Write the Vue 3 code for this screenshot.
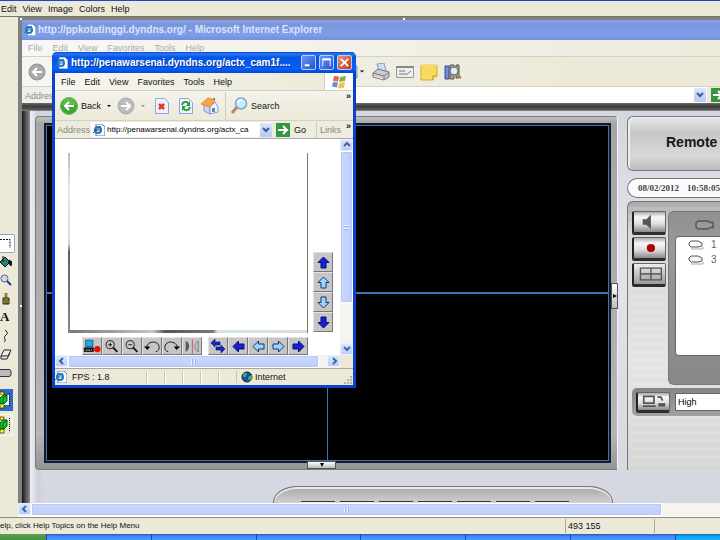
<script setup>
const paintMenu = ['Edit', 'View', 'Image', 'Colors', 'Help']
const browserMenu = ['File', 'Edit', 'View', 'Favorites', 'Tools', 'Help']
const tools = ['Select', 'Fill', 'Magnifier', 'Brush', 'Text', 'Curve', 'Eraser', 'Rounded rectangle']
const cameras = [1, 3]
const tilt = [
  { name: 'Tilt up fast', turn: 'up', tone: 'solid' },
  { name: 'Tilt up', turn: 'up', tone: 'pale' },
  { name: 'Tilt down', turn: 'down', tone: 'pale' },
  { name: 'Tilt down fast', turn: 'down', tone: 'solid' }
]
const pan = [
  { name: 'Pan left fast', turn: 'left', tone: 'solid' },
  { name: 'Pan left', turn: 'left', tone: 'pale' },
  { name: 'Pan right', turn: 'right', tone: 'pale' },
  { name: 'Pan right fast', turn: 'right', tone: 'solid' }
]
const arrows = {
  up: 'M6.5 1 12 6.5H9V12H4V6.5H1z',
  down: 'M6.5 12 12 6.5H9V1H4v5.500H1z',
  left: 'M1 6.500 6.500 1v3H12v5H6.500v3z',
  right: 'M12 6.500 6.500 1v3H1v5h5.500v3z'
}
</script>

<template>
  <div class="desktop">
    <nav class="paint-menu">
      <button v-for="m in paintMenu" :key="m">{{ m }}</button>
    </nav>

    <main class="work">
      <aside class="toolbox">
        <div class="tools">
          <button v-for="(t, i) in tools" :key="t" :aria-label="t" :class="{ active: i === 0 }">
            <svg v-if="i === 0" viewBox="0 0 12 12"><path d="M0 2.500h10V11" fill="none" stroke="#111" stroke-dasharray="2 1" /></svg>
            <svg v-else-if="i === 1" viewBox="0 0 12 12"><path d="M0 6 5 1l5 5-5 5z" fill="#2b7f78" stroke="#111" /><path d="M3 0v6M9 4l3 2-1 4-3-3" stroke="#111" fill="#111" /></svg>
            <svg v-else-if="i === 2" viewBox="0 0 12 12"><circle cx="4.500" cy="4.500" r="3.500" fill="#c9dce8" stroke="#667" /><path d="m7 7 4 4" stroke="#22339a" stroke-width="2" /></svg>
            <svg v-else-if="i === 3" viewBox="0 0 12 12"><path d="M5 0h2v5H5z" fill="#caa800" stroke="#554400" stroke-width=".6" /><path d="M3 5h6v6H3z" fill="#d8c33c" stroke="#222" /><path d="M3 7h6M5 8v3M7 8v3" stroke="#222" /></svg>
            <span v-else-if="i === 4" class="letter">A</span>
            <svg v-else-if="i === 5" viewBox="0 0 12 12"><path d="M5 0c4 3 2 4 0 6s2 4-1 6" fill="none" stroke="#111" /></svg>
            <svg v-else-if="i === 6" viewBox="0 0 12 12"><path d="M4 2h7L8 8H1zM1 8v3h6l3-6" fill="#eee" stroke="#222" /></svg>
            <svg v-else viewBox="0 0 12 12"><rect x="-3" y="2.500" width="14" height="7" rx="2" fill="#bbb" stroke="#333" /></svg>
          </button>
        </div>
        <div class="modes">
          <button v-for="n in 2" :key="n" :class="{ chosen: n === 1 }" :aria-label="n === 1 ? 'Opaque' : 'Transparent'">
            <svg viewBox="0 0 12 20"><path d="M0 2h4v3H0zM0 14h4v4H0z" fill="#ff0" stroke="#222" stroke-width=".7" /><path :d="n === 1 ? 'M0 5h9v10H0z' : ''" fill="#fff" /><path d="M0 8l3-3h4v6l-3 3H0z" fill="#10c52d" stroke="#075715" /><path d="M3 8v6M3 8l4-3" stroke="#075715" /><path d="M9.500 3v13" stroke="#111" stroke-dasharray="1 1" /></svg>
          </button>
        </div>
      </aside>

      <section class="canvas">
        <div class="browser">
          <header class="title dim">
            <svg class="ie" viewBox="0 0 12 12"><path d="M3 0h6l3 3v9H3z" fill="#fff" stroke="#507bbd" /><circle cx="5" cy="6" r="3" fill="none" stroke="#2675ba" stroke-width="2" /><path d="M2 6h6M0 9 8 2" stroke="#2675ba" /></svg>
            <h1>http://ppkotatinggi.dyndns.org/ - Microsoft Internet Explorer</h1>
          </header>
          <nav class="menu"><button v-for="m in browserMenu" :key="m">{{ m }}</button></nav>
          <div class="toolbar">
            <button class="round" aria-label="Back">
              <svg viewBox="0 0 18 18"><circle cx="9" cy="9" r="8" fill="#aaa" stroke="#929292" /><path d="M14 9H5m4-4L5 9l4 4" stroke="#fff" stroke-width="2" fill="none" /></svg>
            </button>
            <div class="page-tools">
              <svg viewBox="0 0 18 18"><path d="M0 3h9v12H0z" fill="#bfd1f1" stroke="#738fc8" /><path d="M12 7.500h4l-2 2z" /></svg>
              <svg viewBox="0 0 18 18"><path d="m5 1 7-1 2 8H7z" fill="#cbe0ff" stroke="#829cc5" /><path d="m1 10 5-4 11 3v5l-5 3L1 14z" fill="#ccc" stroke="#777" /><path d="m1 10 11 3 5-4M12 13v4" stroke="#777" fill="none" /><path d="m2 13 9 3" stroke="#eee" /></svg>
              <svg viewBox="0 0 18 18"><path d="M.5 3.500h17v11H.5z" fill="#eee" stroke="#999" /><path d="M0 4h18" stroke="#888" stroke-width="2" /><path d="M3 8h6M3 11h7m0 1 5-4" stroke="#777" /></svg>
              <svg viewBox="0 0 18 18"><path d="M1 2h16v11l-4 4H1z" fill="#f8da62" stroke="#d4aa24" /><path d="M1 2h16" stroke="#fff0a0" /><path d="M17 13h-4v4" fill="#fff2aa" stroke="#b8901c" /></svg>
              <svg viewBox="0 0 18 18"><path d="M1 3h4v13H1z" fill="#758ed5" stroke="#34488c" /><path d="M6 2h4v14H6zM12 2h3v13h-3z" fill="#b2a373" stroke="#555" /><circle cx="10" cy="8" r="4" fill="#d6eff8" stroke="#667" /><path d="m13 11 4 4" stroke="#a68738" stroke-width="2" /></svg>
            </div>
          </div>
          <div class="address">
            <label for="page-url">Address</label>
            <input id="page-url" value="" />
            <button class="drop" aria-label="Show addresses"><svg viewBox="0 0 8 8"><path d="m1 2 3 3 3-3" fill="none" stroke="#405991" stroke-width="2" /></svg></button>
            <button class="go" aria-label="Go"><svg viewBox="0 0 14 14"><path d="M0 0h14v14H0z" fill="#359642" /><path d="M2 7h9M7 3l4 4-4 4" stroke="#fff" stroke-width="2" fill="none" /></svg></button>
          </div>

          <div class="page">
            <div class="viewer">
              <div class="feeds"><div v-for="n in 4" :key="n"></div></div>
              <button class="tab side" aria-label="Hide panel"><svg viewBox="0 0 4 4"><path d="M0 0 4 2 0 4z" /></svg></button>
              <button class="tab foot" aria-label="Hide controls"><svg viewBox="0 0 4 4"><path d="M0 0h4L2 4z" /></svg></button>
            </div>
            <aside class="remote">
              <h2>Remote</h2>
              <p class="clock"><time>08/02/2012</time><time>10:58:05</time></p>
              <div class="controls">
                <div class="split">
                  <div class="keys">
                    <button aria-label="Sound"><svg viewBox="0 0 32 22"><path d="M8 8h4l5-5v16l-5-5H8z" fill="#555" /></svg></button>
                    <button aria-label="Record"><svg viewBox="0 0 32 22"><circle cx="17" cy="11" r="4.500" fill="#ac0005" /></svg></button>
                    <button aria-label="Split view" class="dull"><svg viewBox="0 0 32 22"><path d="M5.500 4.500h23v13h-23zM17 5v13M6 11h22" fill="none" stroke="#555" stroke-width="1.500" /></svg></button>
                  </div>
                  <div class="cams">
                    <svg class="cam" viewBox="0 0 20 10"><path d="M3 1h10l2 1.500h3v5h-3L13 9H3L1 7V3z" fill="#999" stroke="#555" stroke-width="1.500" /></svg>
                    <ul>
                      <li v-for="c in cameras" :key="c"><svg viewBox="0 0 16 10"><path d="M3 1h7l4 2v3l-4 1H3L1 5V3z" fill="#f7f7f7" stroke="#555" /><path d="M3 9h12V7" stroke="#aaa" fill="none" /></svg>{{ c }}</li>
                    </ul>
                  </div>
                </div>
                <div class="quality">
                  <button aria-label="Display"><svg viewBox="0 0 34 21"><path d="M5 5h12v8H5zM4 16.500h15M21 6h4l2 4" fill="none" stroke="#555" stroke-width="2" /><path d="M22 13h8v4h-8z" fill="#555" /></svg></button>
                  <select aria-label="Quality"><option>High</option></select>
                </div>
              </div>
            </aside>
            <div class="dock"><button v-for="n in 7" :key="n" :aria-label="'Preset ' + n"></button></div>
          </div>
        </div>

        <div class="hscroll outer">
          <button aria-label="Scroll left"><svg viewBox="0 0 8 8"><path d="M5 1 2 4l3 3" fill="none" stroke="#4863a1" stroke-width="2" /></svg></button>
          <div class="thumb"><i></i></div>
          <div class="rest"></div>
        </div>
      </section>

      <section class="popup">
        <header class="title">
          <svg class="ie" viewBox="0 0 12 12"><path d="M3 0h6l3 3v9H3z" fill="#fff" stroke="#477bd2" /><circle cx="5" cy="6" r="3" fill="none" stroke="#2675ba" stroke-width="2" /><path d="M2 6h6M0 9 8 2" stroke="#2675ba" /></svg>
          <h1>http://penawarsenai.dyndns.org/actx_cam1f....</h1>
          <button aria-label="Minimize"><svg viewBox="0 0 14 14"><path d="M3 10h5" stroke="#fff" stroke-width="2" /></svg></button>
          <button aria-label="Maximize"><svg viewBox="0 0 14 14"><path d="M3 11V4h8v7" fill="none" stroke="#fff" /><path d="M2.500 3.500h9" stroke="#fff" stroke-width="2" /></svg></button>
          <button aria-label="Close" class="close"><svg viewBox="0 0 14 14"><path d="m3 3 8 8m0-8-8 8" stroke="#fff" stroke-width="2" /></svg></button>
        </header>
        <nav class="menu">
          <button v-for="m in browserMenu" :key="m">{{ m }}</button>
          <span class="flag"><svg viewBox="0 0 16 14"><path d="m3 1 5 .5-1 5-5-.5z" fill="#e5673f" /><path d="m9 2 6-1-1 5-6 1z" fill="#7db34b" /><path d="m2 7 5 .5-1 5-5-1z" fill="#5d92dc" /><path d="m8 8 6-1-1 6-6 .5z" fill="#f2c54b" /></svg></span>
        </nav>
        <div class="toolbar">
          <button class="labelled">
            <svg viewBox="0 0 18 18"><circle cx="9" cy="9" r="8.500" fill="#3fa535" stroke="#70b563" /><path d="M2 8a7 7 0 0 1 14 0" fill="#72c75c" opacity=".6" /><path d="M14 9H5m4-4L5 9l4 4" stroke="#fff" stroke-width="2" fill="none" /></svg>Back
          </button>
          <svg class="caret" viewBox="0 0 4 4"><path d="M0 1h4L2 3z" /></svg>
          <button aria-label="Forward"><svg viewBox="0 0 18 18"><circle cx="9" cy="9" r="8" fill="#bbb" stroke="#aaa" /><path d="M4 9h9M9 5l4 4-4 4" stroke="#fff" stroke-width="2" fill="none" /></svg></button>
          <svg class="caret faint" viewBox="0 0 4 4"><path d="M0 1h4L2 3z" /></svg>
          <div class="set">
            <button aria-label="Stop"><svg viewBox="0 0 18 18"><path d="M2.500 1.500h9l4 4v11h-13z" fill="#edf3ff" stroke="#91a7dc" /><path d="m6 7 5 5m0-5-5 5" stroke="#e33b1f" stroke-width="2.500" /></svg></button>
            <button aria-label="Refresh"><svg viewBox="0 0 18 18"><path d="M2.500 1.500h9l4 4v11h-13z" fill="#edf3ff" stroke="#91a7dc" /><path d="M5 8c1-4 5-4 7-1M13 10c-1 4-5 4-7 1" fill="none" stroke="#299e3e" stroke-width="2" /><path d="M13 4v5H9zM5 14V9h4z" fill="#299e3e" /></svg></button>
            <button aria-label="Home"><svg viewBox="0 0 18 18"><path d="m3 8 6 2v7l-6-3z" fill="#c7d8f4" stroke="#849bc8" /><path d="m9 10 5-5 3 5v5l-8 2z" fill="#edf3fc" stroke="#849bc8" /><path d="M11 11h3v4h-3z" fill="#6283bd" /><path d="m0 7 7-6 7 2-5 7z" fill="#f4a544" stroke="#e28c2f" /><path d="M12 1h2v3" fill="#c44c35" /></svg></button>
          </div>
          <button class="labelled search"><svg viewBox="0 0 18 18"><path d="m2 16 5-6" stroke="#be895a" stroke-width="3" /><circle cx="11" cy="6.500" r="5.500" fill="#c9edfb" stroke="#7ba6d0" stroke-width="1.500" /><path d="M8 6c0-2 2-3 4-3" stroke="#fff" fill="none" stroke-width="2" /></svg>Search</button>
          <span class="more">»</span>
        </div>
        <div class="address">
          <label for="cam-url">Address</label>
          <div class="combo">
            <svg class="ie" viewBox="0 0 12 12"><path d="M3 0h6l3 3v9H3z" fill="#fff" stroke="#477bd2" /><circle cx="5" cy="6" r="3" fill="none" stroke="#2675ba" stroke-width="2" /><path d="M2 6h6M0 9 8 2" stroke="#194f97" /></svg>
            <input id="cam-url" value="http://penawarsenai.dyndns.org/actx_ca" />
            <button class="drop" aria-label="Show addresses"><svg viewBox="0 0 8 8"><path d="m1 2 3 3 3-3" fill="none" stroke="#405991" stroke-width="2" /></svg></button>
          </div>
          <button class="go"><svg viewBox="0 0 14 14"><path d="M0 0h14v14H0z" fill="#359642" /><path d="M2 7h9M7 3l4 4-4 4" stroke="#fff" stroke-width="2" fill="none" /></svg>Go</button>
          <a class="links" href="#">Links</a>
          <span class="more">»</span>
        </div>

        <div class="content">
          <div class="camera">
            <div class="picture"></div>
            <div class="tilt">
              <button v-for="b in tilt" :key="b.name" :aria-label="b.name"><svg viewBox="0 0 13 13"><path :d="arrows[b.turn]" :class="b.tone" /></svg></button>
            </div>
            <div class="strip">
              <div class="group">
                <button aria-label="Record"><svg viewBox="0 0 20 16"><path d="M3 1h8v7H3z" fill="#1ab1d2" stroke="#2350a6" /><path d="M1 9h11v5H1z" fill="#111" /><path d="M3 12h7" stroke="#fff" stroke-dasharray="2 1" /><circle cx="16" cy="11" r="3.500" fill="#f00b0b" /></svg></button>
                <button aria-label="Zoom in"><svg viewBox="0 0 20 16"><circle cx="8" cy="6" r="4.500" fill="none" stroke="#111" /><path d="M6 6h4M8 4v4" stroke="#111" /><path d="m11 9 5 5" stroke="#111" stroke-width="2" /></svg></button>
                <button aria-label="Zoom out"><svg viewBox="0 0 20 16"><circle cx="8" cy="6" r="4.500" fill="none" stroke="#111" /><path d="M6 6h4" stroke="#111" /><path d="m11 9 5 5" stroke="#111" stroke-width="2" /></svg></button>
                <button aria-label="Rotate left"><svg viewBox="0 0 20 16"><path d="M4 9c1-8 14-8 14 0 0 2-1 4-4 5" fill="none" stroke="#111" /><path d="M1 8h7l-3 4z" /></svg></button>
                <button aria-label="Rotate right"><svg viewBox="0 0 20 16"><path d="M16 9C15 1 2 1 2 9c0 2 1 4 4 5" fill="none" stroke="#111" /><path d="M19 8h-7l3 4z" /></svg></button>
                <button aria-label="Mirror"><svg viewBox="0 0 20 16"><path d="M3 2c5 2 5 9 0 12z" fill="#555c5c" /><path d="M10.500 0v16" stroke="#d55" /><path d="M17 2c-5 2-5 9 0 12z" fill="#c3c6ca" stroke="#777" /></svg></button>
              </div>
              <div class="group">
                <button aria-label="Auto pan"><svg viewBox="0 0 16 14"><path d="m1 4 4-4v3h5v3H5v2zM15 10l-4 4v-3H6V8h5V6z" fill="#1824c0" stroke="#08106c" stroke-width=".6" /></svg></button>
                <button v-for="b in pan" :key="b.name" :aria-label="b.name"><svg viewBox="0 0 13 13"><path :d="arrows[b.turn]" :class="b.tone" /></svg></button>
              </div>
            </div>
          </div>
          <div class="vscroll">
            <button aria-label="Scroll up"><svg viewBox="0 0 8 8"><path d="m1 5 3-3 3 3" fill="none" stroke="#4863a1" stroke-width="2" /></svg></button>
            <div class="thumb"><i></i></div>
            <div class="rest"></div>
            <button aria-label="Scroll down"><svg viewBox="0 0 8 8"><path d="m1 2 3 3 3-3" fill="none" stroke="#4863a1" stroke-width="2" /></svg></button>
          </div>
          <div class="hscroll">
            <button aria-label="Scroll left"><svg viewBox="0 0 8 8"><path d="M5 1 2 4l3 3" fill="none" stroke="#4863a1" stroke-width="2" /></svg></button>
            <div class="thumb"><i></i></div>
            <div class="rest"></div>
            <button aria-label="Scroll right"><svg viewBox="0 0 8 8"><path d="m3 1 3 3-3 3" fill="none" stroke="#4863a1" stroke-width="2" /></svg></button>
          </div>
          <div class="corner"></div>
        </div>

        <footer class="popup-status">
          <svg class="ie" viewBox="0 0 12 12"><path d="M3 0h6l3 3v9H3z" fill="#fff" stroke="#477bd2" /><circle cx="5" cy="6" r="3" fill="none" stroke="#2675ba" stroke-width="2" /><path d="M2 6h6M0 9 8 2" stroke="#2675ba" /></svg>
          <span class="fps">FPS : 1.8</span>
          <span v-for="n in 5" :key="n" class="cell"></span>
          <span class="zone"><svg viewBox="0 0 12 12"><circle cx="6" cy="6" r="5" fill="#1b49b5" stroke="#123" /><path d="M2 3c4-2 5-1 3 2s-2 0-3 1zM7 6l4-2v4L8 10z" fill="#42b34a" /></svg>Internet</span>
          <svg class="grip" viewBox="0 0 9 9"><path d="M6 0h2v2H6zM3 3h2v2H3zM6 3h2v2H6zM0 6h2v2H0zM3 6h2v2H3zM6 6h2v2H6z" fill="#b8b4a0" /></svg>
        </footer>
      </section>
    </main>

    <footer class="status"><span>elp, click Help Topics on the Help Menu</span><output>493 155</output><span></span></footer>
    <div class="taskbar"><i class="start"></i><i v-for="n in 6" :key="n"></i><i class="tray"></i></div>
  </div>
</template>

<style>
body { margin: 0; overflow: hidden; }
</style>

<style scoped>
* { box-sizing: border-box; }
.desktop { height: 100vh; display: flex; flex-direction: column; background: #ece9d8; font: 9px/12px "Liberation Sans", sans-serif; color: #111; overflow: hidden; }
button { font: inherit; color: inherit; padding: 0; border: 0; background: none; display: flex; align-items: center; justify-content: center; flex: none; }
input, select { font: inherit; color: #000; border: 0; padding: 0; margin: 0; background: #fff; border-radius: 0; appearance: none; min-width: 0; outline: 0; }
svg { display: block; flex: none; }
h1, h2, p, ul { margin: 0; padding: 0; }

.paint-menu { flex: none; height: 17px; display: flex; align-items: center; gap: 6px; padding-left: 1px; border-top: 1px solid #2b4c8f; border-bottom: 1px solid #77746a; box-shadow: inset 0 2px #dfe8f6; }
.work { flex: 1; min-height: 0; display: flex; position: relative; }
.toolbox { flex: none; width: 18px; padding-top: 217px; }
.tools { display: grid; grid-template-rows: repeat(8, 1fr); height: 148px; width: 15px; }
.tools button { justify-content: flex-start; }
.tools .active { border: 1px solid #94a8b8; border-left: 0; border-radius: 0 2px 2px 0; background: #fff; }
.tools svg { width: 12px; height: 12px; }
.letter { font: bold 13px/16px "Liberation Serif", serif; }
.modes { padding-top: 7px; display: grid; gap: 3px; width: 13px; }
.modes button { height: 22px; justify-content: flex-start; border: 1px solid #faf9f2; border-left: 0; }
.modes .chosen { background: #316ac5; border-color: #316ac5; }
.modes svg { width: 12px; height: 20px; }

.canvas { flex: 1; min-width: 0; display: flex; flex-direction: column; padding-top: 3px; border-bottom: 1px solid #fff; background: linear-gradient(#fff, #fff) 2px 1px / 2px 2px no-repeat, linear-gradient(#fff, #fff) 55% 1px / 2px 2px no-repeat, linear-gradient(#fff, #fff) 2px 58% / 2px 2px no-repeat, #808080; }
.browser { flex: 1; min-height: 0; margin-left: 4px; display: flex; flex-direction: column; overflow: hidden; color: #8a8a88; }
.title { display: flex; align-items: center; flex: none; }
.title h1 { font: bold 10px/16px "Liberation Sans", sans-serif; white-space: nowrap; flex: 1; }
.dim { height: 20px; padding-left: 2px; gap: 2px; color: #d9e4fb; background: linear-gradient(#8ba3e0, #7a95df 20%, #7f9fe8 75%, #728ee0); }
.ie { width: 12px; height: 12px; }
.menu { display: flex; align-items: center; flex: none; }
.browser .menu { height: 17px; padding-left: 6px; gap: 10px; background: linear-gradient(to right, #f7f7f5, #ecebdc); border-bottom: 1px solid #d5d2c2; color: #aaa; }
.browser .toolbar { height: 30px; display: flex; align-items: center; flex: none; padding-left: 6px; background: linear-gradient(to right, #f5f5f2, #ece9d8 80%); border-bottom: 1px solid #d5d2c2; }
.round svg, .page-tools svg { width: 18px; height: 18px; }
.page-tools { display: flex; gap: 6px; padding-left: 302px; }
.browser .address { height: 16px; display: flex; align-items: center; flex: none; background: #fff; }
.browser .address label { width: 37px; padding-left: 3px; align-self: stretch; background: #f0efea; line-height: 18px; }
.browser .address input { flex: 1; height: 16px; }
.drop { width: 12px; height: 14px; background: linear-gradient(#dbe6ff, #b5c9f5); border-radius: 1px; }
.drop svg { width: 8px; height: 8px; }
.go svg { width: 14px; height: 14px; }
.browser .go { width: 13px; height: 16px; margin-left: 1px; justify-content: flex-start; overflow: hidden; background: #ece9d8; padding-left: 4px; }

.page { flex: 1; min-height: 0; display: grid; grid-template: minmax(0, 1fr) 33px / minmax(0, 1fr) 93px; column-gap: 9px; padding: 13px 0 0 13px; background: linear-gradient(#6d6d6d, #3b3b3b 40%, #5e5e5e 90%, #b5b5ba) 0 0 / 100% 8px no-repeat, linear-gradient(to right, #161616, #555 50%, #8c8c90) 0 0 / 8px 100% no-repeat, linear-gradient(to right, #f0f0f7, #ced1da 8px, transparent 14px) 8px 8px no-repeat, linear-gradient(#d2d6de, #e2e4e9 40%, #d4d7e0); }
.viewer { position: relative; padding: 8px 8px 8px 10px; border: 1px solid #7c7c7c; border-right-color: #f4f4f4; border-radius: 4px 4px 0 4px; background: linear-gradient(to bottom, #bfbfbf, #a5a5a5 7px, #b5b5b5 90%, #959595); }
.feeds { height: 100%; display: grid; grid-template: 1fr 1fr / 1fr 1fr; gap: 2px 1px; background: #3e70bd; border: 1px solid #3e70bd; outline: 2px solid #171b22; }
.feeds div { background: #000; }
.tab { position: absolute; background: linear-gradient(#fff, #bbb); border: 1px solid #555; }
.tab svg { width: 4px; height: 4px; }
.side { right: -1px; top: 166px; width: 7px; height: 26px; }
.foot { bottom: 0; left: 271px; width: 29px; height: 8px; }

.remote { min-width: 0; display: flex; flex-direction: column; }
.remote h2 { height: 55px; flex: none; padding-left: 38px; border: 1px solid #777; border-right: 0; border-radius: 6px 0 0 6px; font: bold 14px/50px "Liberation Sans", sans-serif; color: #161616; background: linear-gradient(#e8e8e8, #c7c7c7 30%, #d9d9d9 75%, #bababa); box-shadow: inset 2px 1px #eee; }
.clock { flex: none; height: 20px; margin: 7px 0 3px; display: flex; gap: 8px; padding-left: 10px; border: 1px solid #777; border-right: 0; border-radius: 10px 0 0 10px; background: #fafafa; font: bold 9px/18px "Liberation Serif", serif; color: #444; white-space: nowrap; }
.controls { flex: 1; min-height: 0; padding: 9px 0 0 4px; border: 1px solid #777; border-right: 0; border-bottom: 0; border-radius: 6px 0 0 0; background: repeating-linear-gradient(transparent 0 5px, #ffffff1c 5px 8px), linear-gradient(#aaa, #d8d8d8 30px, #e4e4e4 60%, #d6d6d6); }
.split { display: flex; gap: 2px; height: 174px; }
.keys { width: 34px; display: grid; gap: 2px; align-content: start; }
.keys button, .quality button { background: linear-gradient(#aaa, #f7f7f7 25%, #ddd 60%, #888); border: 1px solid #666; border-left: 2px solid #222; border-bottom: 3px solid #2d2d2d; border-radius: 2px; }
.keys button { height: 24px; width: 34px; }
.keys .dull { background: linear-gradient(#eee, #999); }
.keys svg { width: 32px; height: 20px; }
.cams { flex: 1; padding: 8px 0 0 6px; background: linear-gradient(#919191, #999 20%, #888); border: 1px solid #777; border-radius: 6px 0 0 6px; border-right: 0; }
.cam { width: 20px; height: 10px; margin-left: 20px; }
.cams ul { list-style: none; margin-top: 6px; height: 120px; background: #fff; border: 1px solid #666; border-right: 0; border-radius: 4px 0 0 4px; padding-left: 12px; font-size: 10px; line-height: 15px; color: #666; }
.cams li { display: flex; align-items: center; gap: 7px; }
.cams li svg { width: 16px; height: 10px; }
.quality { height: 28px; margin-top: 3px; display: flex; align-items: center; gap: 5px; padding-left: 4px; background: linear-gradient(#858585, #a2a2a2); border-radius: 5px 0 0 5px; }
.quality button { width: 34px; height: 21px; }
.quality svg { width: 30px; height: 18px; }
.quality select { flex: 1; height: 18px; padding-left: 2px; border: 1px solid #666; border-right: 0; }
.dock { grid-column: 1 / -1; display: flex; gap: 5px; align-items: end; align-self: end; justify-self: start; width: 340px; height: 17px; margin-left: 238px; padding: 0 27px; border: 1px solid #777; border-bottom: 0; border-radius: 24px 24px 0 0 / 16px 16px 0 0; background: linear-gradient(#aaa, #cfcfcf); box-shadow: inset 0 2px #e7e7e9; }
.dock button { width: 34px; height: 2px; border-top: 1px solid #333; background: #eee; }

.hscroll { display: flex; align-items: stretch; background: #f5f4ee; }
.outer { flex: none; height: 13px; }
.hscroll button, .vscroll button { width: 13px; height: 12px; background: linear-gradient(#dce6ff, #bccdf8); border: 1px solid #e8effe; border-radius: 2px; }
.hscroll button svg, .vscroll button svg { width: 8px; height: 8px; }
.thumb { display: flex; align-items: center; justify-content: center; background: linear-gradient(#cbd8ff, #c0cdf9); border: 1px solid #fff; outline: 1px solid #b7c7ef; outline-offset: -2px; border-radius: 2px; }
.thumb i { width: 5px; height: 6px; background: repeating-linear-gradient(to right, #eef3ff 0 1px, #9db2e8 1px 2px, transparent 2px 3px); }
.outer .thumb { flex: 1; }
.outer .rest { width: 58px; }

.popup { position: absolute; left: 52px; top: 35px; width: 304px; height: 336px; display: flex; flex-direction: column; padding: 0 3px 3px; background: #0b3fd0; border-radius: 5px 5px 0 0; overflow: hidden; }
.popup .title { height: 21px; margin: 0 -3px; padding: 0 4px; gap: 3px; color: #fff; background: linear-gradient(#0a48c8, #2878f8 10%, #0455e4 25%, #0560fa 80%, #0449cf); }
.popup .title h1 { text-shadow: 1px 1px #0a318c; }
.popup .title button { width: 15px; height: 15px; border: 1px solid #b9cdfa; border-radius: 2px; background: linear-gradient(135deg, #6a95f2, #2454d6); }
.popup .title .close { background: linear-gradient(135deg, #e99377, #c33817); }
.popup .title button svg { width: 13px; height: 13px; }
.popup .menu { height: 18px; padding-left: 6px; gap: 9px; background: linear-gradient(to right, #f6f5f0, #ece9d8); border-bottom: 1px solid #d3d0c0; }
.flag { margin-left: auto; width: 29px; height: 17px; background: #fff; border-left: 1px solid #d3d0c0; display: flex; align-items: center; justify-content: center; }
.flag svg { width: 16px; height: 14px; }
.popup .toolbar { height: 30px; flex: none; display: flex; align-items: center; gap: 6px; padding-left: 5px; background: linear-gradient(#f4f3ec, #ece9d8); border-bottom: 1px solid #d3d0c0; }
.popup .toolbar button svg { width: 18px; height: 18px; }
.labelled { gap: 3px; }
.popup .caret { width: 4px; height: 4px; }
.faint { opacity: .4; }
.set { display: flex; gap: 6px; padding-left: 2px; }
.search { border-left: 1px solid #d0cdbd; height: 28px; padding-left: 4px; }
.more { margin-left: auto; padding-right: 2px; font-weight: bold; align-self: flex-start; line-height: 10px; }
.popup .address { height: 17px; flex: none; display: flex; align-items: center; background: #eeebdf; }
.popup .address label { width: 36px; padding-left: 2px; color: #8b887e; }
.combo { flex: none; width: 181px; height: 15px; display: flex; align-items: center; gap: 2px; padding-left: 2px; background: #fff; }
.combo input { flex: 1; height: 13px; font-size: 8px; }
.popup .go { gap: 4px; margin-left: 4px; }
.links { margin-left: 10px; padding-left: 3px; border-left: 1px solid #d0cdbd; color: #8b887e; text-decoration: none; line-height: 16px; }
.content { flex: 1; min-height: 0; display: grid; grid-template: minmax(0, 1fr) 13px / minmax(0, 1fr) 13px; background: #fff; border-top: 1px solid #aaa; }
.camera { display: grid; grid-template: minmax(0, 1fr) 18px / 240px 20px; column-gap: 5px; row-gap: 4px; padding: 14px 0 0 13px; }
.picture { border-left: 2px solid; border-image: linear-gradient(#bbb, #dfe9e9 20%, #cfdddd 50%, #635c68 55%, #888) 1; background: linear-gradient(#777, #777) 100% 0 / 1px 100% no-repeat, linear-gradient(to right, #777, #bcc8cc 35%, #555 40%, #777 60%, #d4e5e2 62%, #d5e0df) 0 100% / 100% 3px no-repeat; }
.tilt { align-self: end; display: grid; margin-bottom: 1px; }
.tilt button { width: 20px; height: 20px; }
.tilt button, .group button { background: #c6c6c6; border: 1px solid #e3e3e3; border-right-color: #777; border-bottom-color: #777; }
.tilt svg, .group svg { width: 13px; height: 13px; }
.strip { display: flex; justify-content: space-between; padding-left: 14px; }
.group { display: flex; }
.group button { width: 20px; height: 18px; }
.group:first-child svg { width: 18px; height: 15px; }
.group:last-child button:first-child svg { width: 16px; height: 14px; }
.solid { fill: #1720d8; stroke: #080e75; }
.pale { fill: #9bd5ff; stroke: #17356d; }
.vscroll { display: flex; flex-direction: column; background: #f5f4ee; }
.vscroll .thumb { height: 152px; background: linear-gradient(to right, #cbd8ff, #bccbf8); }
.vscroll .thumb i { width: 6px; height: 5px; background: repeating-linear-gradient(#eef3ff 0 1px, #9db2e8 1px 2px, transparent 2px 3px); }
.vscroll .rest { flex: 1; }
.popup .hscroll .thumb { flex: 1; }
.popup .hscroll .rest { width: 8px; }
.corner { background: #ece9d8; }
.popup-status { height: 17px; flex: none; display: flex; align-items: center; border-top: 1px solid #aaa799; background: #ece9d8; }
.fps { flex: 1; padding-left: 5px; }
.cell { width: 18px; height: 13px; border-left: 1px solid #c8c4b2; box-shadow: inset 1px 0 #fff; }
.zone { display: flex; align-items: center; gap: 2px; width: 108px; padding-left: 4px; border-left: 1px solid #c8c4b2; }
.zone svg { width: 12px; height: 12px; }
.popup-status .grip { width: 9px; height: 9px; align-self: end; }

.status { flex: none; height: 17px; display: flex; align-items: center; border-top: 1px solid #8f8c80; background: #ece9d8; white-space: nowrap; }
.status span:first-child { flex: 1; font-size: 8px; }
.status output { width: 89px; padding-left: 2px; border-left: 1px solid #aaa799; line-height: 14px; }
.status span:last-child { width: 66px; height: 14px; border-left: 1px solid #aaa799; }
.taskbar { flex: none; height: 6px; display: flex; background: #245edb; }
.taskbar i { flex: 1; border-left: 1px solid #174ab7; background: linear-gradient(#2459c8, #4b92f8 50%); }
.taskbar .start { flex: none; width: 46px; border: 0; background: linear-gradient(#5c9c57, #3d963b); }
.taskbar .tray { flex: none; width: 45px; background: linear-gradient(#126bc0, #17adf5 50%); }
</style>
